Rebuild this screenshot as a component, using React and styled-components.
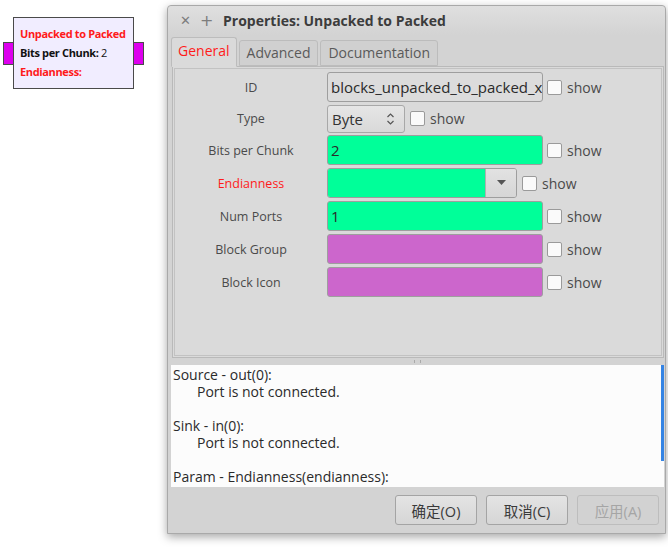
import React from 'react';
import styled, { createGlobalStyle } from 'styled-components';

const GlobalStyle = createGlobalStyle`
  html, body {
    margin: 0;
    padding: 0;
    background: #ffffff;
  }
  body {
    font-family: "Open Sans", "Noto Sans CJK SC", sans-serif;
    color: #3c3c3c;
  }
`;

const Desktop = styled.div`
  position: relative;
  width: 668px;
  height: 549px;
  overflow: hidden;
  background: #ffffff;
`;

/* flow graph block on the canvas */
const Block = styled.div`
  position: absolute;
  left: 13px;
  top: 17px;
  width: 119px;
  height: 70px;
  background: #f1edff;
  border: 1px solid #4a4a4a;
  display: flex;
  flex-direction: column;
  gap: 5px;
`;

const BlockText = styled.div`
  font-family: "Open Sans", sans-serif;
  font-size: 11px;
  font-weight: 700;
  line-height: 14px;
  color: ${p => (p.$red ? '#ff1a1a' : '#111')};
  padding-left: 6px;
  letter-spacing: -0.35px;
  &:nth-child(2) {
    margin-top: 9px;
  }
  span {
    font-weight: 400;
  }
`;

const Port = styled.div`
  position: absolute;
  top: 24px;
  width: 9px;
  height: 21px;
  background: #dd00ee;
  border: 1px solid #4a4a4a;
  ${p => (p.$side === 'left' ? 'left: -11px;' : 'right: -11px;')}
`;

/* properties dialog */
const Window = styled.div`
  position: absolute;
  left: 167px;
  top: 5px;
  width: 499px;
  height: 529px;
  background: #d3d3d3;
  border: 1px solid #a9a9a9;
  border-radius: 4px 4px 0 0;
  box-shadow: 0 3px 10px rgba(0, 0, 0, 0.35);
  display: flex;
  flex-direction: column;
  box-sizing: border-box;
`;

const TitleBar = styled.div`
  height: 29px;
  display: flex;
  align-items: center;
  background: linear-gradient(#dfdfdf, #d3d3d3);
  border-radius: 4px 4px 0 0;
  padding-left: 12px;
  gap: 9px;
`;

const TitleButton = styled.span`
  font-family: "DejaVu Sans", sans-serif;
  font-size: ${p => p.$size || 14}px;
  color: #7d7d7d;
  width: 11px;
  text-align: center;
`;

const Title = styled.div`
  margin-left: 3px;
  font-family: "Open Sans", sans-serif;
  font-weight: 700;
  font-size: 14px;
  color: #3c3c3c;
`;

const Body = styled.div`
  flex: 1;
  display: flex;
  flex-direction: column;
  padding: 0 1px 0 3px;
`;

const Tabs = styled.div`
  display: flex;
  align-items: flex-end;
  gap: 2px;
  height: 31px;
  position: relative;
  z-index: 1;
`;

const Tab = styled.div`
  height: ${p => (p.$active ? 30 : 26)}px;
  padding: 0 ${p => (p.$active ? 6 : 7)}px ${p => (p.$active ? 3 : 1)}px;
  box-sizing: border-box;
  display: flex;
  align-items: center;
  font-family: "Open Sans", sans-serif;
  font-size: 14px;
  color: ${p => (p.$active ? '#ff1a1a' : '#5a5a5a')};
  background: ${p => (p.$active ? '#dadada' : '#d0d0d0')};
  border: 1px solid #bcbcbc;
  border-bottom: ${p => (p.$active ? '1px solid #dadada' : '1px solid #bcbcbc')};
  border-radius: 3px 3px 0 0;
  margin-bottom: ${p => (p.$active ? -1 : 0)}px;
`;

const Page = styled.div`
  height: 292px;
  margin-left: 1px;
  background: #dadada;
  border: 1px solid #b9b9b9;
  padding: 1px;
  box-sizing: border-box;
`;

const PageInner = styled.div`
  height: 100%;
  border: 1px solid #c2c2c2;
  box-sizing: border-box;
  padding-top: 3px;
  display: grid;
  grid-template-columns: 152px 1fr;
  grid-template-rows: 30px 27px repeat(5, 30px);
  row-gap: 3px;
  align-content: start;
`;

const Label = styled.div`
  display: flex;
  align-items: center;
  justify-content: center;
  font-family: "Open Sans", sans-serif;
  font-size: 12.5px;
  color: ${p => (p.$red ? '#ff1a1a' : '#4a4a4a')};
`;

const Field = styled.div`
  display: flex;
  align-items: center;
`;

const Entry = styled.div`
  width: 216px;
  height: 30px;
  flex-shrink: 0;
  box-sizing: border-box;
  border: 1px solid #9e9e9e;
  border-radius: 3px;
  background: ${p => p.$bg || '#dcdcdc'};
  display: flex;
  align-items: center;
  padding-left: 3px;
  font-family: "Open Sans", sans-serif;
  font-size: 15px;
  color: #2a2a2a;
  overflow: hidden;
  white-space: nowrap;
`;

const Combo = styled.div`
  width: 78px;
  height: 28px;
  box-sizing: border-box;
  border: 1px solid #a8a8a8;
  border-radius: 3px;
  background: linear-gradient(#e6e6e6, #d9d9d9);
  display: flex;
  align-items: center;
  justify-content: space-between;
  padding: 0 10px 0 4px;
  font-family: "Open Sans", sans-serif;
  font-size: 15px;
  color: #333;
`;

const DropEntry = styled.div`
  width: 190px;
  height: 30px;
  box-sizing: border-box;
  border: 1px solid #9e9e9e;
  border-radius: 3px;
  display: flex;
  overflow: hidden;
`;

const DropText = styled.div`
  flex: 1;
  background: #00ff99;
`;

const DropButton = styled.div`
  width: 30px;
  border-left: 1px solid #b0b0b0;
  background: linear-gradient(#e2e2e2, #d6d6d6);
  display: flex;
  align-items: center;
  justify-content: center;
`;

const Check = styled.div`
  width: 13px;
  height: 13px;
  margin-left: ${p => p.$gap || 4}px;
  border: 1px solid #9a9a9a;
  border-radius: 2px;
  background: #fafafa;
`;

const Show = styled.span`
  margin-left: 5px;
  font-family: "Open Sans", sans-serif;
  font-size: 14px;
  color: #4a4a4a;
`;

const Splitter = styled.div`
  height: 7px;
  display: flex;
  justify-content: center;
  align-items: center;
`;

const Grip = styled.div`
  width: 5px;
  height: 3px;
  border-left: 1px solid #aaa;
  border-right: 1px solid #aaa;
`;

const Console = styled.div`
  position: relative;
  height: 121px;
  background: #fcfcfc;
  padding: 1px 0 0 2px;
  overflow: hidden;
  font-family: "Open Sans", sans-serif;
  font-size: 14px;
  line-height: 17px;
  color: #2a2a2a;
  white-space: pre;

  &::after {
    content: '';
    position: absolute;
    right: 0;
    top: 0;
    width: 3px;
    height: 96px;
    background: #3584e4;
  }
`;

const Line = styled.div`
  height: 17px;
  padding-left: ${p => (p.$indent ? 24 : 0)}px;
`;

const ButtonRow = styled.div`
  flex: 1;
  display: flex;
  justify-content: flex-end;
  align-items: flex-start;
  gap: 9px;
  padding: 8px 5px 0 0;
`;

const Button = styled.div`
  width: 82px;
  height: 30px;
  box-sizing: border-box;
  border: 1px solid ${p => (p.$disabled ? '#bdbdbd' : '#a4a4a4')};
  border-radius: 3px;
  background: ${p => (p.$disabled ? '#d2d2d2' : 'linear-gradient(#e4e4e4, #d6d6d6)')};
  display: flex;
  align-items: center;
  justify-content: center;
  font-family: "Open Sans", "Noto Sans CJK SC", sans-serif;
  font-size: 14.5px;
  color: ${p => (p.$disabled ? '#a5a5a5' : '#3a3a3a')};
`;

const Spin = () => (
  <svg width="7" height="14" viewBox="0 0 7 14">
    <path d="M0.5 5 L3.5 2 L6.5 5" fill="none" stroke="#555" strokeWidth="1.2" />
    <path d="M0.5 9 L3.5 12 L6.5 9" fill="none" stroke="#555" strokeWidth="1.2" />
  </svg>
);

const Arrow = () => (
  <svg width="9" height="6" viewBox="0 0 9 6">
    <path d="M0 0 L9 0 L4.5 5 Z" fill="#555" />
  </svg>
);

const rows = [
  { label: 'ID', kind: 'entry', value: 'blocks_unpacked_to_packed_x', bg: '#dcdcdc' },
  { label: 'Type', kind: 'combo', value: 'Byte' },
  { label: 'Bits per Chunk', kind: 'entry', value: '2', bg: '#00ff99' },
  { label: 'Endianness', kind: 'drop', red: true },
  { label: 'Num Ports', kind: 'entry', value: '1', bg: '#00ff99' },
  { label: 'Block Group', kind: 'entry', value: '', bg: '#cc66cc' },
  { label: 'Block Icon', kind: 'entry', value: '', bg: '#cc66cc' },
];

const lines = [
  { text: 'Source - out(0):' },
  { text: 'Port is not connected.', indent: true },
  { text: '' },
  { text: 'Sink - in(0):' },
  { text: 'Port is not connected.', indent: true },
  { text: '' },
  { text: 'Param - Endianness(endianness):' },
];

const renderField = row => {
  if (row.kind === 'combo') {
    return (
      <Field>
        <Combo>{row.value}<Spin /></Combo>
        <Check $gap={5} />
        <Show>show</Show>
      </Field>
    );
  }
  if (row.kind === 'drop') {
    return (
      <Field>
        <DropEntry>
          <DropText />
          <DropButton><Arrow /></DropButton>
        </DropEntry>
        <Check $gap={5} />
        <Show>show</Show>
      </Field>
    );
  }
  return (
    <Field>
      <Entry $bg={row.bg}>{row.value}</Entry>
      <Check />
      <Show>show</Show>
    </Field>
  );
};

export default function App() {
  return (
    <>
      <GlobalStyle />
      <Desktop>
        <Block>
          <Port $side="left" />
          <BlockText $red>Unpacked to Packed</BlockText>
          <BlockText>Bits per Chunk: <span>2</span></BlockText>
          <BlockText $red>Endianness:</BlockText>
          <Port $side="right" />
        </Block>

        <Window>
          <TitleBar>
            <TitleButton $size={13}>✕</TitleButton>
            <TitleButton $size={16}>+</TitleButton>
            <Title>Properties: Unpacked to Packed</Title>
          </TitleBar>
          <Body>
            <Tabs>
              <Tab $active>General</Tab>
              <Tab>Advanced</Tab>
              <Tab>Documentation</Tab>
            </Tabs>
            <Page>
              <PageInner>
                {rows.map(row => (
                  <React.Fragment key={row.label}>
                    <Label $red={row.red}>{row.label}</Label>
                    {renderField(row)}
                  </React.Fragment>
                ))}
              </PageInner>
            </Page>
            <Splitter><Grip /></Splitter>
            <Console>
              {lines.map((l, i) => (
                <Line key={i} $indent={l.indent}>{l.text}</Line>
              ))}
            </Console>
            <ButtonRow>
              <Button>确定(O)</Button>
              <Button>取消(C)</Button>
              <Button $disabled>应用(A)</Button>
            </ButtonRow>
          </Body>
        </Window>
      </Desktop>
    </>
  );
}
